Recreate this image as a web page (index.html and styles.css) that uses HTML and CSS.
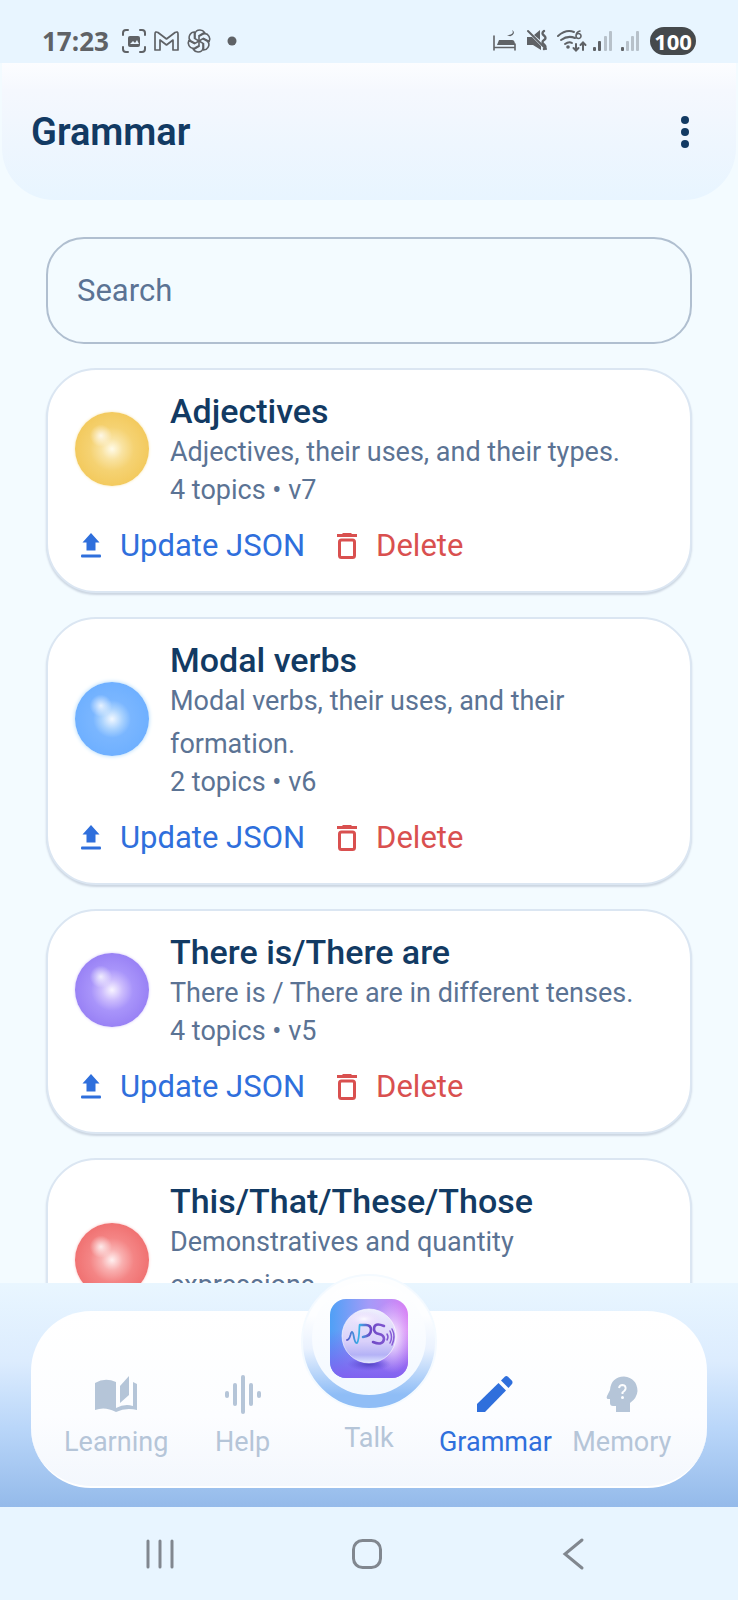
FILE: index.html
```html
<!DOCTYPE html>
<html lang="en">
<head>
  <meta charset="UTF-8" />
  <meta name="viewport" content="width=device-width, initial-scale=1" />
  <title>Grammar</title>
  <link rel="stylesheet" href="styles.css">
</head>
<body>
  <!-- shared icons -->
  <svg class="sprite" aria-hidden="true">
    <symbol id="i-upload" viewBox="0 0 24 28">
      <path d="M12 1 L20.500 10.500 H16.500 V18.500 H7.500 V10.500 H3.500 Z" />
      <rect x="2" y="22.500" width="20" height="3" rx="1" />
    </symbol>
    <symbol id="i-trash" viewBox="0 0 24 28">
      <path d="M8 1 h8 l1 1 h5 v3 h-20 v-3 h5 z" />
      <rect x="4.500" y="8" width="15" height="17.500" rx="2" fill="none" stroke="currentColor" stroke-width="3" />
    </symbol>
  </svg>

  <div class="statusbar">
    <span class="clock">17:23</span>
    <svg class="st-left" width="124" height="26" viewBox="0 0 124 26">
      <g fill="none" stroke="#5f6266" stroke-width="2" stroke-linecap="round">
        <path d="M2 7 V5 Q2 2 5 2 H7 M19 2 H21 Q24 2 24 5 V7 M24 19 V21 Q24 24 21 24 H19 M7 24 H5 Q2 24 2 21 V19" />
        <path d="M34 22 V6 Q34 3 37 4.500 L45.500 11 L54 4.500 Q57 3 57 6 V22 H52 V12 L45.500 17 L39 12 V22 Z" stroke-width="1.700" stroke-linejoin="round" />
      </g>
      <rect x="7" y="8" width="12" height="11" rx="2" fill="#5f6266" />
      <path d="M9 16 l3 -3 2 2 2 -3 2 4 z" fill="#e8f5ff" />
      <g fill="none" stroke="#5f6266" stroke-width="1.600" transform="translate(78 13)">
        <path id="petal" d="M-4 -2.300 V-7 Q-3.500 -11 1 -11 Q4 -11 5.500 -8.500 L0 -5.200 V0.500" />
        <use href="#petal" transform="rotate(60)" />
        <use href="#petal" transform="rotate(120)" />
        <use href="#petal" transform="rotate(180)" />
        <use href="#petal" transform="rotate(240)" />
        <use href="#petal" transform="rotate(300)" />
      </g>
      <circle cx="111" cy="13" r="4.500" fill="#5f6266" />
    </svg>
    <span class="spacer"></span>
    <svg class="st-right" width="150" height="28" viewBox="0 0 150 28">
      <g fill="none" stroke="#5f6266" stroke-width="1.600" stroke-linecap="round">
        <path d="M2 9 V23 M2 20.500 H23 M23 17 V23" />
        <path d="M36 4 L54 22" stroke-width="2" />
        <path d="M52 4 q-3 2 0 4.500 t0 4.500 t0 4.500 t0 4.500" stroke-width="2.400" />
      </g>
      <path d="M5 18 L7 13 H20 Q23 13 23 18 Z" fill="#5f6266" />
      <path d="M20 3 Q23 8 15 8 Q20 11 22 6 Q22 4 20 3 Z" fill="#5f6266" />
      <path d="M35 10 H40 L49 19 V23 L41 18 H35 Z M42 8 L48 3 V13 Z" fill="#5f6266" />
      <g fill="none" stroke="#5f6266" stroke-width="2" stroke-linecap="round">
        <path d="M66 9 Q74 2 82 5 M69 13 Q76 8 83 11 M73 17 Q77 14 80 16" />
        <path d="M88 4 Q84 5 84 9 M84 9 a2.500 2.500 0 1 0 5 0 a2.500 2.500 0 1 0 -5 0" stroke-width="1.600" />
        <path d="M84 17 V23 M81.500 21 L84 23.500 L86.500 21 M91 23 V16 M88.500 18 L91 15.500 L93.500 18" />
      </g>
      <circle cx="76" cy="20" r="1.800" fill="#5f6266" />
      <g fill="#5f6266">
        <rect x="101" y="20" width="3" height="4" rx="1" />
        <rect x="106" y="14" width="3" height="10" rx="1" />
        <rect x="129" y="20" width="3" height="4" rx="1" />
      </g>
      <g fill="#b7c1ca">
        <rect x="112" y="9" width="3" height="15" rx="1" />
        <rect x="117" y="4" width="3" height="20" rx="1" />
        <rect x="134" y="14" width="3" height="10" rx="1" />
        <rect x="139" y="9" width="3" height="15" rx="1" />
        <rect x="144" y="4" width="3" height="20" rx="1" />
      </g>
    </svg>
    <span class="battery">100</span>
  </div>

  <header class="topbar">
    <h1>Grammar</h1>
    <button class="menu-btn" aria-label="More options">
      <svg width="8" height="32" viewBox="0 0 8 32" fill="currentColor">
        <circle cx="4" cy="4" r="4" />
        <circle cx="4" cy="16" r="4" />
        <circle cx="4" cy="28" r="4" />
      </svg>
    </button>
  </header>

  <main class="content">
    <input class="search" type="search" placeholder="Search" aria-label="Search" />

    <article class="card">
      <div class="card-main">
        <span class="ball yellow"></span>
        <div class="card-text">
          <h2>Adjectives</h2>
          <p class="desc">Adjectives, their uses, and their types.</p>
          <p class="meta">4 topics • v7</p>
        </div>
      </div>
      <div class="actions">
        <button class="update"><svg><use href="#i-upload" /></svg>Update JSON</button>
        <button class="delete"><svg><use href="#i-trash" /></svg>Delete</button>
      </div>
    </article>

    <article class="card">
      <div class="card-main">
        <span class="ball blue"></span>
        <div class="card-text">
          <h2>Modal verbs</h2>
          <p class="desc">Modal verbs, their uses, and their formation.</p>
          <p class="meta">2 topics • v6</p>
        </div>
      </div>
      <div class="actions">
        <button class="update"><svg><use href="#i-upload" /></svg>Update JSON</button>
        <button class="delete"><svg><use href="#i-trash" /></svg>Delete</button>
      </div>
    </article>

    <article class="card">
      <div class="card-main">
        <span class="ball purple"></span>
        <div class="card-text">
          <h2>There is/There are</h2>
          <p class="desc">There is / There are in different tenses.</p>
          <p class="meta">4 topics • v5</p>
        </div>
      </div>
      <div class="actions">
        <button class="update"><svg><use href="#i-upload" /></svg>Update JSON</button>
        <button class="delete"><svg><use href="#i-trash" /></svg>Delete</button>
      </div>
    </article>

    <article class="card">
      <div class="card-main">
        <span class="ball red"></span>
        <div class="card-text">
          <h2>This/That/These/Those</h2>
          <p class="desc">Demonstratives and quantity<br>expressions.</p>
          <p class="meta">&nbsp;</p>
        </div>
      </div>
    </article>
  </main>

  <div class="nav-area">
    <nav class="tabs">
      <a href="#" class="tab">
        <svg width="44" height="40" viewBox="0 0 44 40" fill="currentColor">
          <path d="M1 9 Q11 3 22 8 V38 Q11 32 1 36 Z" />
          <path d="M26 12 L35 2 V21 L26 29 Z" />
          <path d="M39 8 L43 10 V36 Q32 33 22 38 V34 Q31 29 39 32 Z" />
        </svg>
        Learning
      </a>
      <a href="#" class="tab">
        <svg width="36" height="40" viewBox="0 0 36 40" fill="currentColor">
          <rect x="0" y="17" width="4" height="7" rx="2" />
          <rect x="8" y="9" width="4" height="23" rx="2" />
          <rect x="16" y="1" width="4" height="39" rx="2" />
          <rect x="24" y="9" width="4" height="23" rx="2" />
          <rect x="32" y="17" width="4" height="7" rx="2" />
        </svg>
        Help
      </a>
      <a href="#" class="tab talk">
        <span class="orb">
          <span class="orb-inner">
            <svg class="app-icon" width="78" height="79" viewBox="0 0 78 79">
              <defs>
                <linearGradient id="tile" x1="0" y1="0" x2="1" y2="0">
                  <stop offset="0" stop-color="#4fa0f6" />
                  <stop offset=".5" stop-color="#a49bf8" />
                  <stop offset="1" stop-color="#d880f5" />
                </linearGradient>
                <linearGradient id="tileShade" x1="0" y1="0" x2="0" y2="1">
                  <stop offset=".4" stop-color="#7a5cf0" stop-opacity="0" />
                  <stop offset="1" stop-color="#8062f0" />
                </linearGradient>
                <radialGradient id="glow">
                  <stop offset="0" stop-color="#fff" />
                  <stop offset="1" stop-color="#e9c8ff" stop-opacity="0" />
                </radialGradient>
                <radialGradient id="shadow">
                  <stop offset="0" stop-color="#4338b8" stop-opacity=".8" />
                  <stop offset="1" stop-color="#5a48d8" stop-opacity="0" />
                </radialGradient>
                <linearGradient id="bubble" x1="0" y1="0" x2="0" y2="1">
                  <stop offset="0" stop-color="#eeeffd" />
                  <stop offset=".6" stop-color="#d9d0fa" />
                  <stop offset=".85" stop-color="#b4b2f6" />
                  <stop offset="1" stop-color="#dfe6ff" />
                </linearGradient>
                <linearGradient id="ink" gradientUnits="userSpaceOnUse" x1="16" y1="0" x2="64" y2="0">
                  <stop offset="0" stop-color="#5d55c8" />
                  <stop offset=".27" stop-color="#36b4e8" />
                  <stop offset=".5" stop-color="#6d48c4" />
                  <stop offset="1" stop-color="#8a5fd8" />
                </linearGradient>
              </defs>
              <rect width="78" height="79" fill="url(#tile)" />
              <rect width="78" height="79" fill="url(#tileShade)" />
              <ellipse cx="62" cy="38" rx="22" ry="36" fill="url(#glow)" />
              <ellipse cx="39" cy="65" rx="22" ry="7" fill="url(#shadow)" />
              <circle cx="39" cy="37" r="27" fill="url(#bubble)" stroke="#fff" stroke-opacity=".6" stroke-width="1" />
              <ellipse cx="34" cy="20" rx="18" ry="8" fill="url(#glow)" opacity=".8" />
              <g fill="none" stroke="url(#ink)" stroke-width="2.600" stroke-linecap="round" stroke-linejoin="round">
                <path d="M17 41 Q19 41 20.500 36 Q22 30 23.500 36 Q25 45 27 44 Q29 42 29.500 27" stroke-width="1.800" />
                <path d="M30 26 H36 Q41 26 41 31 Q41 37 33 38" />
                <path d="M54 27 Q44 23 44 30 Q44 34 49 35 Q54 36 54 40 Q53 47 43 43" />
                <path d="M57 35 Q59 38 57 41 M60 32 Q63 38 60 44 M62 30 Q66 37 62 46" stroke-width="1.500" />
              </g>
            </svg>
          </span>
        </span>
        Talk
      </a>
      <a href="#" class="tab active">
        <svg width="36" height="40" viewBox="0 0 36 40" fill="currentColor">
          <path d="M0 38 V30 L21.500 9 L29 16.500 L8 38 Z" />
          <path d="M24 6.500 L28 2.500 Q29.500 1.500 31 2.800 L35 6.800 Q36 8.500 35 10 L31.500 14 Z" />
        </svg>
        Grammar
      </a>
      <a href="#" class="tab">
        <svg width="32" height="40" viewBox="0 0 32 40" fill="currentColor">
          <path d="M10 38 V32 H7 Q4 32 4 29 V25 H1.500 Q0 24 1 22 L4 16 Q5 3 18 2.500 Q31 4 31.500 17 Q31 24 24 29 V38 Z" />
          <path d="M13 14 Q13.500 11 16.500 11 Q20 11.500 19.500 15 Q19 17 16.500 18.500 V20" fill="none" stroke="#fcfdff" stroke-width="2" />
          <circle cx="16.500" cy="23.500" r="1.500" fill="#fcfdff" />
        </svg>
        Memory
      </a>
    </nav>
  </div>

  <div class="sysnav">
    <button aria-label="Recent apps">
      <svg width="32" height="34" viewBox="0 0 32 34"><path d="M4 4 V30 M16 4 V30 M28 4 V30" /></svg>
    </button>
    <button aria-label="Home">
      <svg width="32" height="34" viewBox="0 0 32 34"><rect x="2.500" y="3.500" width="27" height="27" rx="9" /></svg>
    </button>
    <button aria-label="Back">
      <svg width="32" height="34" viewBox="0 0 32 34"><path d="M24 3 L7 17 L24 31" /></svg>
    </button>
  </div>
</body>
</html>
```

FILE: styles.css
```css
* {
  box-sizing: border-box;
  margin: 0;
  padding: 0;
}
body {
  display: flex;
  flex-direction: column;
  height: 100vh;
  overflow: hidden;
  font-family: Roboto, "Liberation Sans", sans-serif;
  color: #5b7394;
  background: #f3fbff;
}
button {
  border: none;
  background: none;
  font: inherit;
  color: inherit;
  cursor: pointer;
}
svg {
  display: block;
  flex: none;
}
.sprite {
  position: absolute;
  width: 0;
  height: 0;
}

/* Status bar */
.statusbar {
  display: flex;
  align-items: center;
  flex: none;
  height: 63px;
  padding: 18px 42px 0;
  background: #e8f5ff;
}
.clock {
  font-family: "Open Sans", sans-serif;
  font-size: 26px;
  font-weight: 700;
  line-height: 32px;
  color: #5f6266;
}
.st-left {
  margin-left: 12px;
}
.spacer {
  flex: 1;
}
.st-right {
  margin-right: 8px;
}
.battery {
  width: 46px;
  border-radius: 14px;
  background: #45494c;
  color: #fff;
  font-family: "Open Sans", sans-serif;
  font-size: 22px;
  font-weight: 700;
  line-height: 28px;
  text-align: center;
}

/* Header */
.topbar {
  display: flex;
  align-items: center;
  justify-content: space-between;
  flex: none;
  height: 137px;
  margin: 0 2px;
  padding: 0 30px 0 29px;
  border-radius: 0 0 52px 52px;
  background: linear-gradient(#fcfdff, #f5f8fe 20%, #eef6fe 60%, #e8f5ff);
}
.topbar h1 {
  font-size: 38px;
  font-weight: 600;
  line-height: 48px;
  color: #123a63;
}
.menu-btn {
  padding: 8px 17px;
  color: #123a63;
}

/* List */
.content {
  flex: 1;
  min-height: 0;
  overflow: hidden;
  padding: 37px 46px 0;
}
.search {
  display: block;
  width: 100%;
  height: 107px;
  margin-bottom: 24px;
  padding: 0 29px;
  border: 2px solid #b0bfd0;
  border-radius: 38px;
  outline: none;
  background: transparent;
  font: inherit;
  font-size: 31px;
  color: #123a63;
  appearance: none;
}
.search::placeholder {
  color: #5b7394;
  opacity: 1;
}
.card {
  margin-bottom: 24px;
  padding: 21px 26px 19px 27px;
  border: 2px solid #dbe6f2;
  border-radius: 50px;
  background: #fff;
  box-shadow: 0 2px 2px #ccd6e2;
}
.card-main {
  display: flex;
  align-items: center;
  gap: 21px;
}
.ball {
  flex: none;
  width: 74px;
  height: 74px;
  border-radius: 50%;
}
.ball.yellow {
  background:
    radial-gradient(circle at 35% 32%, #fffc, #fff0 16%),
    radial-gradient(circle, #fffbe8, #f9e3a2 20%, #f5d272 42%, #f3ca5e 70%);
  box-shadow: 0 0 3px #f8e6b0;
}
.ball.blue {
  background:
    radial-gradient(circle at 35% 32%, #fffc, #fff0 16%),
    radial-gradient(circle, #f2f8ff, #a9d2fe 20%, #7ab6ff 36%, #6fb0ff 70%);
  box-shadow: 0 0 4px #a8d6fa;
}
.ball.purple {
  background:
    radial-gradient(circle at 35% 32%, #fffc, #fff0 16%),
    radial-gradient(circle, #f8f4ff, #ccbcfd 20%, #a894fa 40%, #9982f5 70%);
  box-shadow: 0 0 3px #d4c8fa;
}
.ball.red {
  background:
    radial-gradient(circle at 35% 32%, #fffc, #fff0 16%),
    radial-gradient(circle, #fff0f0, #f9b0b0 20%, #f48585 42%, #f07272 70%);
  box-shadow: 0 0 3px #f8c4c4;
}
.card-text {
  flex: 1;
}
.card-text h2 {
  font-size: 34px;
  font-weight: 500;
  line-height: 40px;
  color: #123a63;
}
.desc {
  font-size: 27px;
  line-height: 43px;
}
.meta {
  font-size: 27px;
  line-height: 32px;
}
.actions {
  display: flex;
  gap: 30px;
  margin-top: 14px;
  padding: 8px 4px;
}
.actions button {
  display: flex;
  align-items: center;
  gap: 17px;
  font-size: 31px;
  line-height: 36px;
}
.actions svg {
  width: 24px;
  height: 28px;
  fill: currentColor;
}
.actions .update {
  color: #2f6fdc;
}
.actions .delete {
  color: #d9504f;
}

/* Bottom tabs */
.nav-area {
  position: relative;
  flex: none;
  padding: 28px 31px 19px;
  background: linear-gradient(#e9f6ff, #dcecfe 35%, #b9d6f9 65%, #94baea);
}
.tabs {
  display: flex;
  align-items: flex-end;
  height: 177px;
  padding: 0 22px 28px;
  border-radius: 60px;
  background: linear-gradient(#fff, #fcfdff 60%, #f3f7fd);
  border-bottom: 2px solid #fff;
}
.tab {
  display: flex;
  flex: 1 1 0;
  flex-direction: column;
  align-items: center;
  gap: 12px;
  min-width: 0;
  font-size: 27px;
  line-height: 32px;
  text-decoration: none;
  color: #b5c5d8;
}
.tab.active {
  color: #2f6fdc;
}
.tab.talk {
  padding-bottom: 4px;
}
.orb {
  display: flex;
  align-items: flex-start;
  justify-content: center;
  flex: none;
  width: 136px;
  height: 136px;
  padding-top: 5px;
  border: 2px solid #f4faff;
  border-radius: 50%;
  background: linear-gradient(#fdfeff 30%, #eaf2fe 55%, #8fbdf6 90%);
}
.orb-inner {
  display: flex;
  align-items: center;
  justify-content: center;
  width: 114px;
  height: 114px;
  border-radius: 50%;
  background: linear-gradient(#fff, #f2f8ff);
}
.app-icon {
  overflow: hidden;
  border-radius: 16px;
}

/* System buttons */
.sysnav {
  display: flex;
  flex: none;
  height: 93px;
  padding: 0 60px 0 56px;
  background: #e8f5ff;
}
.sysnav button {
  display: flex;
  flex: 1;
  align-items: center;
  justify-content: center;
}
.sysnav svg {
  fill: none;
  stroke: #81878f;
  stroke-width: 3;
  stroke-linecap: round;
}
```
